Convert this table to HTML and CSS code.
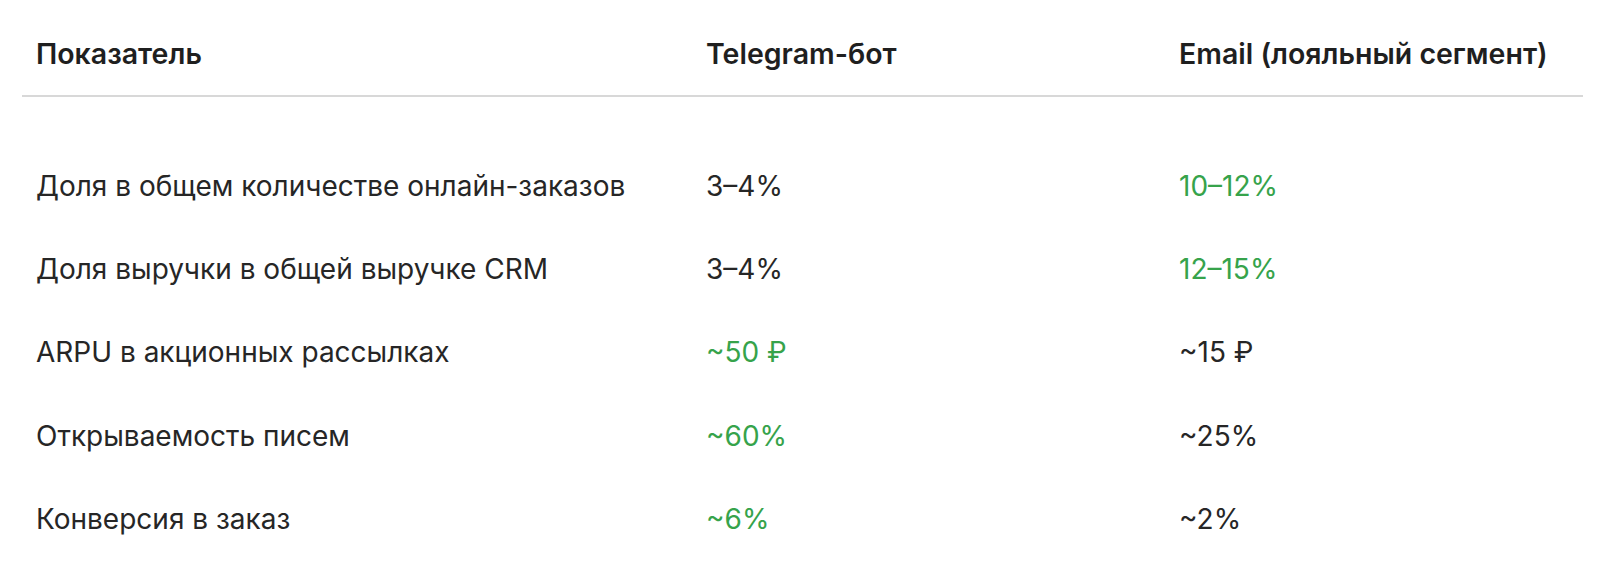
FILE: index.html
```html
<!DOCTYPE html>
<html lang="ru">
<head>
<meta charset="utf-8">
<link rel="stylesheet" href="styles.css">
</head>
<body>
<div class="table">
  <div class="row head">
    <div class="cell">Показатель</div>
    <div class="cell">Telegram-бот</div>
    <div class="cell">Email (лояльный сегмент)</div>
  </div>
  <div class="body">
    <div class="row">
      <div class="cell">Доля в общем количестве онлайн-заказов</div>
      <div class="cell">3–4%</div>
      <div class="cell good">10–12%</div>
    </div>
    <div class="row">
      <div class="cell">Доля выручки в общей выручке CRM</div>
      <div class="cell">3–4%</div>
      <div class="cell good">12–15%</div>
    </div>
    <div class="row">
      <div class="cell">ARPU в акционных рассылках</div>
      <div class="cell good">~50 ₽</div>
      <div class="cell">~15 ₽</div>
    </div>
    <div class="row">
      <div class="cell">Открываемость писем</div>
      <div class="cell good">~60%</div>
      <div class="cell">~25%</div>
    </div>
    <div class="row">
      <div class="cell">Конверсия в заказ</div>
      <div class="cell good">~6%</div>
      <div class="cell">~2%</div>
    </div>
  </div>
</div>
</body>
</html>
```
FILE: styles.css
```css
html, body {
  margin: 0;
  padding: 0;
  background: #ffffff;
}
body {
  font-family: Inter, "Noto Sans", sans-serif;
  color: #222222;
}
.table {
  margin: 0 15px 0 22px;
}
.row {
  display: grid;
  grid-template-columns: 670px 473px 1fr;
  align-items: center;
}
.cell {
  padding-left: 14px;
  white-space: nowrap;
}
.head {
  height: 97px;
  padding-top: 12px;
  box-sizing: border-box;
  border-bottom: 2px solid #d8d8d8;
  font-weight: 600;
  font-size: 28.5px;
  color: #1f1f1f;
}
.body {
  padding-top: 47px;
}
.body .row {
  height: 83.4px;
  font-size: 28px;
  font-weight: 400;
  color: #262626;
}
.body .row .good {
  color: #36a34b;
}
```
